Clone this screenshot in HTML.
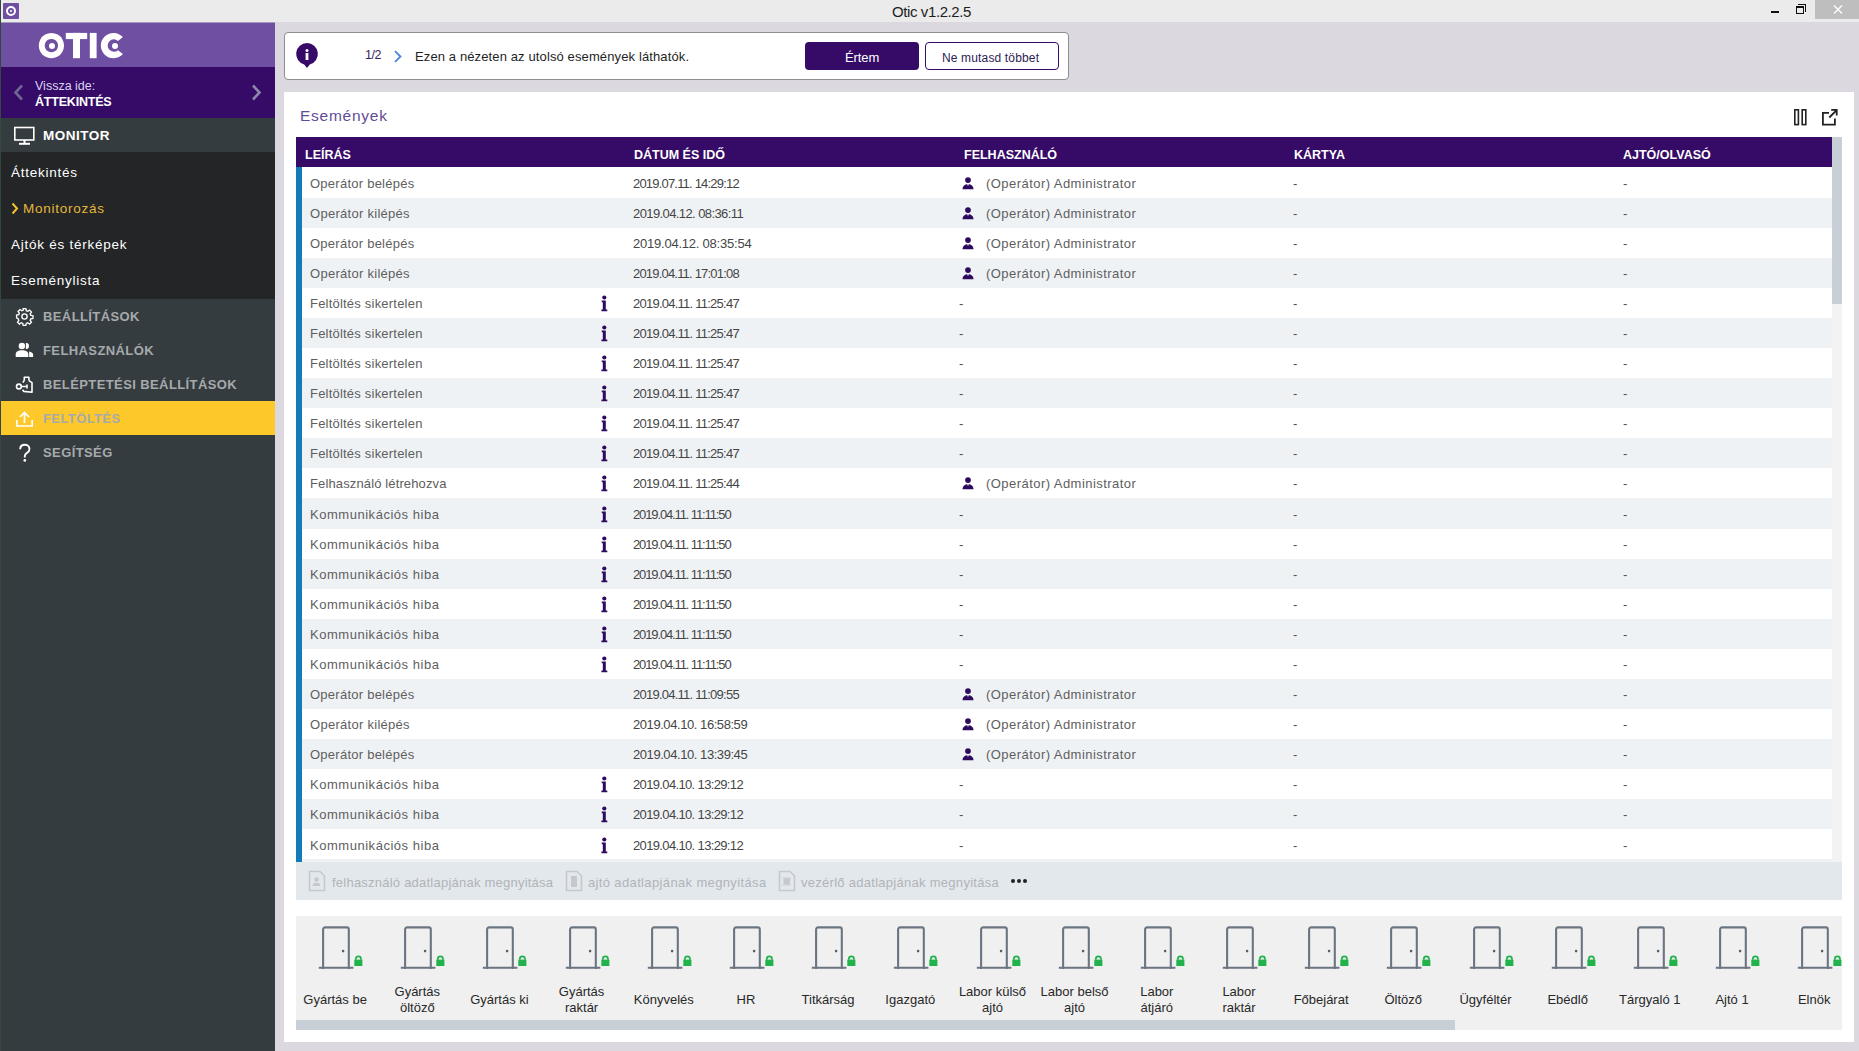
<!DOCTYPE html>
<html><head><meta charset="utf-8"><title>Otic</title><style>
*{margin:0;padding:0;box-sizing:border-box}
html,body{width:1859px;height:1051px;overflow:hidden}
body{background:#dcd8df;font-family:"Liberation Sans", sans-serif;position:relative}
.a{position:absolute}
.t{position:absolute;white-space:nowrap;line-height:1}
</style></head>
<body>
<div class="a" style="left:0;top:0;width:1859px;height:22px;background:#ebebeb"></div>
<div class="a" style="left:3px;top:3px;width:16px;height:16px;background:#6f4fa1;border-radius:1px"></div>
<div class="a" style="left:6px;top:6px;width:10px;height:10px;border:2.5px solid #fff;border-radius:50%"></div>
<div class="a" style="left:10px;top:10px;width:2px;height:2px;background:#fff;border-radius:50%"></div>
<div class="t" style="left:892px;top:4px;font-size:15px;color:#1e1e1e;letter-spacing:-0.4px">Otic v1.2.2.5</div>
<div class="a" style="left:1771px;top:11px;width:8px;height:2px;background:#111"></div>
<div class="a" style="left:1798px;top:4px;width:8px;height:8px;border-top:1.5px solid #111;border-right:1.5px solid #111"></div>
<div class="a" style="left:1796px;top:6px;width:8px;height:8px;border:1.5px solid #111;border-top-width:2px;background:#ebebeb"></div>
<div class="a" style="left:1815px;top:0;width:44px;height:19px;background:#bebebe"></div>
<svg class="a" style="left:1833px;top:5px" width="10" height="9" viewBox="0 0 10 9"><path d="M1 0.5L9 8.5M9 0.5L1 8.5" stroke="#fff" stroke-width="1.3"/></svg>
<div class="a" style="left:0;top:0;width:1px;height:1051px;background:#34493d"></div>
<div class="a" style="left:1px;top:22px;width:274px;height:1px;background:#a898bf"></div>
<div class="a" style="left:1px;top:23px;width:274px;height:1028px;background:#353c3f"></div>
<div class="a" style="left:1px;top:23px;width:274px;height:44px;background:#6f4fa1"></div>
<svg class="a" style="left:37px;top:32px" width="90" height="28" viewBox="0 0 90 28">
<g fill="#fff">
<path fill-rule="evenodd" d="M14.4 0.9a12.65 12.65 0 1 0 0.01 0zM14.4 6.9a6.65 6.65 0 1 1 -0.01 0z"/>
<circle cx="15" cy="13.9" r="3"/>
<rect x="28.8" y="0.9" width="21.4" height="6.2"/>
<rect x="36" y="0.9" width="7" height="25.3"/>
<rect x="52.8" y="0.9" width="6.8" height="25.3"/>
<path d="M85.9 5.1A12.65 12.65 0 1 0 85.9 22L81 18.2A6.2 6.2 0 1 1 81 8.9Z"/>
<circle cx="78" cy="13.9" r="3"/>
</g></svg>
<div class="a" style="left:1px;top:67px;width:274px;height:51px;background:#350b67"></div>
<svg class="a" style="left:13px;top:84px" width="11" height="17" viewBox="0 0 11 17"><path d="M9 1.5L2.5 8.5L9 15.5" fill="none" stroke="#6d6791" stroke-width="2.6"/></svg>
<svg class="a" style="left:251px;top:84px" width="11" height="17" viewBox="0 0 11 17"><path d="M2 1.5L8.5 8.5L2 15.5" fill="none" stroke="#8e88ad" stroke-width="2.6"/></svg>
<div class="t" style="left:35px;top:80px;font-size:12.5px;color:#dcd3f0;letter-spacing:0px">Vissza ide:</div>
<div class="t" style="left:35px;top:96px;font-size:12.5px;font-weight:700;color:#fff;letter-spacing:-0.2px">ÁTTEKINTÉS</div>
<svg class="a" style="left:13px;top:126px" width="23" height="21" viewBox="0 0 23 21"><rect x="1.8" y="1.5" width="19" height="12.5" fill="none" stroke="#fff" stroke-width="1.6"/><rect x="10.5" y="14" width="2" height="3" fill="#fff"/><rect x="6" y="16.8" width="11" height="2" fill="#fff"/></svg>
<div class="t" style="left:43px;top:129px;font-size:13.5px;font-weight:700;color:#fff;letter-spacing:0.5px">MONITOR</div>
<div class="a" style="left:1px;top:152px;width:274px;height:147px;background:#232527"></div>
<div class="t" style="left:11px;top:166px;font-size:13.5px;color:#fff;letter-spacing:0.75px">Áttekintés</div>
<svg class="a" style="left:11px;top:202px" width="8" height="13" viewBox="0 0 8 13"><path d="M1.5 1.5L6 6.5L1.5 11.5" fill="none" stroke="#f2c12e" stroke-width="2"/></svg>
<div class="t" style="left:23px;top:202px;font-size:13.5px;color:#e4b83a;letter-spacing:0.75px">Monitorozás</div>
<div class="t" style="left:11px;top:238px;font-size:13.5px;color:#fff;letter-spacing:0.75px">Ajtók és térképek</div>
<div class="t" style="left:11px;top:274px;font-size:13.5px;color:#fff;letter-spacing:0.75px">Eseménylista</div>
<div class="a" style="left:1px;top:401px;width:274px;height:34px;background:#fdc82a"></div>
<div class="t" style="left:43px;top:310px;font-size:13px;font-weight:700;color:#a6aaad;letter-spacing:0.4px">BEÁLLÍTÁSOK</div>
<div class="t" style="left:43px;top:344px;font-size:13px;font-weight:700;color:#a6aaad;letter-spacing:0.4px">FELHASZNÁLÓK</div>
<div class="t" style="left:43px;top:378px;font-size:13px;font-weight:700;color:#a6aaad;letter-spacing:0.4px">BELÉPTETÉSI BEÁLLÍTÁSOK</div>
<div class="t" style="left:43px;top:412px;font-size:13px;font-weight:700;color:#a6aaad;letter-spacing:0.4px">FELTÖLTÉS</div>
<div class="t" style="left:43px;top:446px;font-size:13px;font-weight:700;color:#a6aaad;letter-spacing:0.4px">SEGÍTSÉG</div>
<svg class="a" style="left:15px;top:307px" width="19" height="19" viewBox="0 0 24 24"><path fill="none" stroke="#fff" stroke-width="1.7" d="M10.3 2h3.4l.5 2.7 1.9.8 2.3-1.6 2.4 2.4-1.6 2.3.8 1.9 2.7.5v3.4l-2.7.5-.8 1.9 1.6 2.3-2.4 2.4-2.3-1.6-1.9.8-.5 2.7h-3.4l-.5-2.7-1.9-.8-2.3 1.6-2.4-2.4 1.6-2.3-.8-1.9L2 13.7v-3.4l2.7-.5.8-1.9-1.6-2.3 2.4-2.4 2.3 1.6 1.9-.8z"/><circle cx="12" cy="12" r="3.3" fill="none" stroke="#fff" stroke-width="1.7"/></svg>
<svg class="a" style="left:15px;top:342px" width="19" height="16" viewBox="0 0 19 16"><circle cx="6.9" cy="4" r="3.2" fill="#fff"/><path d="M0.7 15.1V12.1C0.7 9.8 3.4 8.3 7 8.3S13.3 9.8 13.3 12.1V15.1Z" fill="#fff"/><path d="M10.7 0.9A3 3 0 0 1 10.7 6.9A4.2 4.2 0 0 0 10.7 0.9Z" fill="#fff"/><path d="M10.9 0.9A3 3 0 0 1 10.9 6.9Z" fill="#fff"/><path d="M14.1 9.4c2.4 0.6 4 1.6 4 3.2v2.5h-4z" fill="#fff"/></svg>
<svg class="a" style="left:15px;top:375px" width="19" height="19" viewBox="0 0 19 19"><circle cx="3.9" cy="11.5" r="2.4" fill="none" stroke="#fff" stroke-width="1.6"/><path d="M6.3 11.5H12M12 9.6V13.4" fill="none" stroke="#fff" stroke-width="1.6"/><path d="M9.3 5.6V2.2H13.9V5.6M9.3 5.6L7.8 7.4M13.9 5.6L17 7.6V17.2L8.7 16.4L7.6 14.8" fill="none" stroke="#fff" stroke-width="1.6" stroke-linejoin="round"/></svg>
<svg class="a" style="left:15px;top:410px" width="19" height="18" viewBox="0 0 19 18"><path d="M9.5 13V2.5M5 7l4.5-4.5L14 7" fill="none" stroke="#fff" stroke-width="1.7"/><path d="M1.8 10v6h15.4v-6" fill="none" stroke="#fff" stroke-width="1.7"/></svg>
<svg class="a" style="left:17px;top:443px" width="15" height="20" viewBox="0 0 15 20"><path d="M3.2 6.2C3.2 3.5 5.1 1.7 7.8 1.7S12.5 3.5 12.5 6c0 2.3-1.5 3.2-2.8 4.1-1.2 0.8-1.9 1.6-1.9 3.1v1.3" fill="none" stroke="#fff" stroke-width="1.9"/><circle cx="7.8" cy="17.4" r="1.35" fill="#fff"/></svg>
<div class="a" style="left:284px;top:32px;width:785px;height:48px;background:#fff;border:1px solid #8d8d8d;border-radius:4px"></div>
<svg class="a" style="left:295px;top:42px" width="24" height="27" viewBox="0 0 24 27"><path d="M12 1a11 11 0 0 1 2.8 21.6L12 26l-2.8-3.4A11 11 0 0 1 12 1z" fill="#350b67"/><circle cx="12" cy="8.6" r="1.5" fill="#fff"/><rect x="10.6" y="11" width="2.8" height="7" fill="#fff"/></svg>
<div class="t" style="left:365px;top:49px;font-size:12.5px;color:#34285a;letter-spacing:-0.5px">1/2</div>
<svg class="a" style="left:393px;top:50px" width="10" height="13" viewBox="0 0 10 13"><path d="M2 1.2L7.5 6.5L2 11.8" fill="none" stroke="#4a86da" stroke-width="1.8"/></svg>
<div class="t" style="left:415px;top:50px;font-size:13px;color:#1f1f1f;letter-spacing:0.12px">Ezen a nézeten az utolsó események láthatók.</div>
<div class="a" style="left:805px;top:42px;width:114px;height:28px;background:#350b67;border-radius:4px"></div>
<div class="t" style="left:845px;top:51px;font-size:13px;color:#fff;letter-spacing:-0.1px">Értem</div>
<div class="a" style="left:925px;top:42px;width:134px;height:28px;background:#fff;border:1px solid #350b67;border-radius:4px"></div>
<div class="t" style="left:942px;top:52px;font-size:12px;color:#2e2255;letter-spacing:0.15px">Ne mutasd többet</div>
<div class="a" style="left:284px;top:92px;width:1570px;height:950px;background:#fff"></div>
<div class="t" style="left:300px;top:108px;font-size:15.5px;color:#5f4c96;letter-spacing:0.75px">Események</div>
<svg class="a" style="left:1792px;top:108px" width="17" height="19" viewBox="0 0 17 19"><rect x="2.8" y="1.8" width="3.6" height="14.8" fill="none" stroke="#222" stroke-width="1.6"/><rect x="10.2" y="1.8" width="3.6" height="14.8" fill="none" stroke="#222" stroke-width="1.6"/></svg>
<svg class="a" style="left:1820px;top:107px" width="20" height="20" viewBox="0 0 20 20"><path d="M9 5.9H2.9v11.8h12V11.6" fill="none" stroke="#222" stroke-width="1.8"/><path d="M9.3 10.5L16.4 3.4M11.2 2.9h5.5v5.5" fill="none" stroke="#222" stroke-width="1.8"/></svg>
<div class="a" style="left:296px;top:137px;width:1536px;height:30px;background:#350b67"></div>
<div class="t" style="left:305px;top:149px;font-size:12.5px;font-weight:700;color:#fff;letter-spacing:0px">LEÍRÁS</div>
<div class="t" style="left:634px;top:149px;font-size:12.5px;font-weight:700;color:#fff;letter-spacing:0px">DÁTUM ÉS IDŐ</div>
<div class="t" style="left:964px;top:149px;font-size:12.5px;font-weight:700;color:#fff;letter-spacing:0px">FELHASZNÁLÓ</div>
<div class="t" style="left:1294px;top:149px;font-size:12.5px;font-weight:700;color:#fff;letter-spacing:0px">KÁRTYA</div>
<div class="t" style="left:1623px;top:149px;font-size:12.5px;font-weight:700;color:#fff;letter-spacing:0px">AJTÓ/OLVASÓ</div>
<div class="a" style="left:1832px;top:137px;width:10px;height:725px;background:#f3f3f3"></div>
<div class="a" style="left:1832px;top:137px;width:10px;height:167px;background:#c9cfd6"></div>
<div class="a" style="left:296px;top:167px;width:1536px;height:695px;overflow:hidden">
<div class="a" style="left:0;top:0px;width:1536px;height:31px;background:#fff"></div>
<div class="a" style="left:0;top:31px;width:1536px;height:30px;background:#eff2f5"></div>
<div class="a" style="left:0;top:61px;width:1536px;height:30px;background:#fff"></div>
<div class="a" style="left:0;top:91px;width:1536px;height:30px;background:#eff2f5"></div>
<div class="a" style="left:0;top:121px;width:1536px;height:30px;background:#fff"></div>
<div class="a" style="left:0;top:151px;width:1536px;height:30px;background:#eff2f5"></div>
<div class="a" style="left:0;top:181px;width:1536px;height:30px;background:#fff"></div>
<div class="a" style="left:0;top:211px;width:1536px;height:30px;background:#eff2f5"></div>
<div class="a" style="left:0;top:241px;width:1536px;height:30px;background:#fff"></div>
<div class="a" style="left:0;top:271px;width:1536px;height:30px;background:#eff2f5"></div>
<div class="a" style="left:0;top:301px;width:1536px;height:30px;background:#fff"></div>
<div class="a" style="left:0;top:331px;width:1536px;height:31px;background:#eff2f5"></div>
<div class="a" style="left:0;top:362px;width:1536px;height:30px;background:#fff"></div>
<div class="a" style="left:0;top:392px;width:1536px;height:30px;background:#eff2f5"></div>
<div class="a" style="left:0;top:422px;width:1536px;height:30px;background:#fff"></div>
<div class="a" style="left:0;top:452px;width:1536px;height:30px;background:#eff2f5"></div>
<div class="a" style="left:0;top:482px;width:1536px;height:30px;background:#fff"></div>
<div class="a" style="left:0;top:512px;width:1536px;height:30px;background:#eff2f5"></div>
<div class="a" style="left:0;top:542px;width:1536px;height:30px;background:#fff"></div>
<div class="a" style="left:0;top:572px;width:1536px;height:30px;background:#eff2f5"></div>
<div class="a" style="left:0;top:602px;width:1536px;height:30px;background:#fff"></div>
<div class="a" style="left:0;top:632px;width:1536px;height:30px;background:#eff2f5"></div>
<div class="a" style="left:0;top:662px;width:1536px;height:30px;background:#fff"></div>
<div class="a" style="left:0;top:692px;width:1536px;height:30px;background:#eff2f5"></div>
<div class="t" style="left:14px;top:10px;font-size:13px;color:#5e5e5e;letter-spacing:0.25px">Operátor belépés</div>
<div class="t" style="left:337px;top:10px;font-size:13px;color:#454545;letter-spacing:-0.805px">2019.07.11. 14:29:12</div>
<svg class="a" style="left:666px;top:10px" width="12" height="13" viewBox="0 0 12 13"><circle cx="6" cy="3.1" r="2.9" fill="#2e0a5e"/><path d="M0.5 12.2c0-3 2.2-5 5.5-5s5.5 2 5.5 5z" fill="#2e0a5e"/><path d="M5 7.3h2l-1 1.6z" fill="#fff"/></svg>
<div class="t" style="left:690px;top:10px;font-size:13px;color:#5e5e5e;letter-spacing:0.45px">(Operátor) Administrator</div>
<div class="t" style="left:997px;top:10px;font-size:13px;color:#505050">-</div>
<div class="t" style="left:1327px;top:10px;font-size:13px;color:#505050">-</div>
<div class="t" style="left:14px;top:40px;font-size:13px;color:#5e5e5e;letter-spacing:0.28px">Operátor kilépés</div>
<div class="t" style="left:337px;top:40px;font-size:13px;color:#454545;letter-spacing:-0.594px">2019.04.12. 08:36:11</div>
<svg class="a" style="left:666px;top:40px" width="12" height="13" viewBox="0 0 12 13"><circle cx="6" cy="3.1" r="2.9" fill="#2e0a5e"/><path d="M0.5 12.2c0-3 2.2-5 5.5-5s5.5 2 5.5 5z" fill="#2e0a5e"/><path d="M5 7.3h2l-1 1.6z" fill="#fff"/></svg>
<div class="t" style="left:690px;top:40px;font-size:13px;color:#5e5e5e;letter-spacing:0.45px">(Operátor) Administrator</div>
<div class="t" style="left:997px;top:40px;font-size:13px;color:#505050">-</div>
<div class="t" style="left:1327px;top:40px;font-size:13px;color:#505050">-</div>
<div class="t" style="left:14px;top:70px;font-size:13px;color:#5e5e5e;letter-spacing:0.25px">Operátor belépés</div>
<div class="t" style="left:337px;top:70px;font-size:13px;color:#454545;letter-spacing:-0.224px">2019.04.12. 08:35:54</div>
<svg class="a" style="left:666px;top:70px" width="12" height="13" viewBox="0 0 12 13"><circle cx="6" cy="3.1" r="2.9" fill="#2e0a5e"/><path d="M0.5 12.2c0-3 2.2-5 5.5-5s5.5 2 5.5 5z" fill="#2e0a5e"/><path d="M5 7.3h2l-1 1.6z" fill="#fff"/></svg>
<div class="t" style="left:690px;top:70px;font-size:13px;color:#5e5e5e;letter-spacing:0.45px">(Operátor) Administrator</div>
<div class="t" style="left:997px;top:70px;font-size:13px;color:#505050">-</div>
<div class="t" style="left:1327px;top:70px;font-size:13px;color:#505050">-</div>
<div class="t" style="left:14px;top:100px;font-size:13px;color:#5e5e5e;letter-spacing:0.28px">Operátor kilépés</div>
<div class="t" style="left:337px;top:100px;font-size:13px;color:#454545;letter-spacing:-0.805px">2019.04.11. 17:01:08</div>
<svg class="a" style="left:666px;top:100px" width="12" height="13" viewBox="0 0 12 13"><circle cx="6" cy="3.1" r="2.9" fill="#2e0a5e"/><path d="M0.5 12.2c0-3 2.2-5 5.5-5s5.5 2 5.5 5z" fill="#2e0a5e"/><path d="M5 7.3h2l-1 1.6z" fill="#fff"/></svg>
<div class="t" style="left:690px;top:100px;font-size:13px;color:#5e5e5e;letter-spacing:0.45px">(Operátor) Administrator</div>
<div class="t" style="left:997px;top:100px;font-size:13px;color:#505050">-</div>
<div class="t" style="left:1327px;top:100px;font-size:13px;color:#505050">-</div>
<div class="t" style="left:14px;top:130px;font-size:13px;color:#5e5e5e;letter-spacing:0.21px">Feltöltés sikertelen</div>
<svg class="a" style="left:305px;top:128px" width="7" height="17" viewBox="0 0 7 17"><ellipse cx="3.3" cy="2.4" rx="2.1" ry="2" fill="#2e0a5e"/><path d="M0.7 5.6h4.1v8.9h1.5V16.2H0.4v-1.7H1.8V7.2H0.7z" fill="#2e0a5e"/></svg>
<div class="t" style="left:337px;top:130px;font-size:13px;color:#454545;letter-spacing:-0.754px">2019.04.11. 11:25:47</div>
<div class="t" style="left:663px;top:130px;font-size:13px;color:#505050">-</div>
<div class="t" style="left:997px;top:130px;font-size:13px;color:#505050">-</div>
<div class="t" style="left:1327px;top:130px;font-size:13px;color:#505050">-</div>
<div class="t" style="left:14px;top:160px;font-size:13px;color:#5e5e5e;letter-spacing:0.21px">Feltöltés sikertelen</div>
<svg class="a" style="left:305px;top:158px" width="7" height="17" viewBox="0 0 7 17"><ellipse cx="3.3" cy="2.4" rx="2.1" ry="2" fill="#2e0a5e"/><path d="M0.7 5.6h4.1v8.9h1.5V16.2H0.4v-1.7H1.8V7.2H0.7z" fill="#2e0a5e"/></svg>
<div class="t" style="left:337px;top:160px;font-size:13px;color:#454545;letter-spacing:-0.754px">2019.04.11. 11:25:47</div>
<div class="t" style="left:663px;top:160px;font-size:13px;color:#505050">-</div>
<div class="t" style="left:997px;top:160px;font-size:13px;color:#505050">-</div>
<div class="t" style="left:1327px;top:160px;font-size:13px;color:#505050">-</div>
<div class="t" style="left:14px;top:190px;font-size:13px;color:#5e5e5e;letter-spacing:0.21px">Feltöltés sikertelen</div>
<svg class="a" style="left:305px;top:188px" width="7" height="17" viewBox="0 0 7 17"><ellipse cx="3.3" cy="2.4" rx="2.1" ry="2" fill="#2e0a5e"/><path d="M0.7 5.6h4.1v8.9h1.5V16.2H0.4v-1.7H1.8V7.2H0.7z" fill="#2e0a5e"/></svg>
<div class="t" style="left:337px;top:190px;font-size:13px;color:#454545;letter-spacing:-0.754px">2019.04.11. 11:25:47</div>
<div class="t" style="left:663px;top:190px;font-size:13px;color:#505050">-</div>
<div class="t" style="left:997px;top:190px;font-size:13px;color:#505050">-</div>
<div class="t" style="left:1327px;top:190px;font-size:13px;color:#505050">-</div>
<div class="t" style="left:14px;top:220px;font-size:13px;color:#5e5e5e;letter-spacing:0.21px">Feltöltés sikertelen</div>
<svg class="a" style="left:305px;top:218px" width="7" height="17" viewBox="0 0 7 17"><ellipse cx="3.3" cy="2.4" rx="2.1" ry="2" fill="#2e0a5e"/><path d="M0.7 5.6h4.1v8.9h1.5V16.2H0.4v-1.7H1.8V7.2H0.7z" fill="#2e0a5e"/></svg>
<div class="t" style="left:337px;top:220px;font-size:13px;color:#454545;letter-spacing:-0.754px">2019.04.11. 11:25:47</div>
<div class="t" style="left:663px;top:220px;font-size:13px;color:#505050">-</div>
<div class="t" style="left:997px;top:220px;font-size:13px;color:#505050">-</div>
<div class="t" style="left:1327px;top:220px;font-size:13px;color:#505050">-</div>
<div class="t" style="left:14px;top:250px;font-size:13px;color:#5e5e5e;letter-spacing:0.21px">Feltöltés sikertelen</div>
<svg class="a" style="left:305px;top:248px" width="7" height="17" viewBox="0 0 7 17"><ellipse cx="3.3" cy="2.4" rx="2.1" ry="2" fill="#2e0a5e"/><path d="M0.7 5.6h4.1v8.9h1.5V16.2H0.4v-1.7H1.8V7.2H0.7z" fill="#2e0a5e"/></svg>
<div class="t" style="left:337px;top:250px;font-size:13px;color:#454545;letter-spacing:-0.754px">2019.04.11. 11:25:47</div>
<div class="t" style="left:663px;top:250px;font-size:13px;color:#505050">-</div>
<div class="t" style="left:997px;top:250px;font-size:13px;color:#505050">-</div>
<div class="t" style="left:1327px;top:250px;font-size:13px;color:#505050">-</div>
<div class="t" style="left:14px;top:280px;font-size:13px;color:#5e5e5e;letter-spacing:0.21px">Feltöltés sikertelen</div>
<svg class="a" style="left:305px;top:278px" width="7" height="17" viewBox="0 0 7 17"><ellipse cx="3.3" cy="2.4" rx="2.1" ry="2" fill="#2e0a5e"/><path d="M0.7 5.6h4.1v8.9h1.5V16.2H0.4v-1.7H1.8V7.2H0.7z" fill="#2e0a5e"/></svg>
<div class="t" style="left:337px;top:280px;font-size:13px;color:#454545;letter-spacing:-0.754px">2019.04.11. 11:25:47</div>
<div class="t" style="left:663px;top:280px;font-size:13px;color:#505050">-</div>
<div class="t" style="left:997px;top:280px;font-size:13px;color:#505050">-</div>
<div class="t" style="left:1327px;top:280px;font-size:13px;color:#505050">-</div>
<div class="t" style="left:14px;top:310px;font-size:13px;color:#5e5e5e;letter-spacing:0.13px">Felhasználó létrehozva</div>
<svg class="a" style="left:305px;top:308px" width="7" height="17" viewBox="0 0 7 17"><ellipse cx="3.3" cy="2.4" rx="2.1" ry="2" fill="#2e0a5e"/><path d="M0.7 5.6h4.1v8.9h1.5V16.2H0.4v-1.7H1.8V7.2H0.7z" fill="#2e0a5e"/></svg>
<div class="t" style="left:337px;top:310px;font-size:13px;color:#454545;letter-spacing:-0.754px">2019.04.11. 11:25:44</div>
<svg class="a" style="left:666px;top:310px" width="12" height="13" viewBox="0 0 12 13"><circle cx="6" cy="3.1" r="2.9" fill="#2e0a5e"/><path d="M0.5 12.2c0-3 2.2-5 5.5-5s5.5 2 5.5 5z" fill="#2e0a5e"/><path d="M5 7.3h2l-1 1.6z" fill="#fff"/></svg>
<div class="t" style="left:690px;top:310px;font-size:13px;color:#5e5e5e;letter-spacing:0.45px">(Operátor) Administrator</div>
<div class="t" style="left:997px;top:310px;font-size:13px;color:#505050">-</div>
<div class="t" style="left:1327px;top:310px;font-size:13px;color:#505050">-</div>
<div class="t" style="left:14px;top:341px;font-size:13px;color:#5e5e5e;letter-spacing:0.53px">Kommunikációs hiba</div>
<svg class="a" style="left:305px;top:339px" width="7" height="17" viewBox="0 0 7 17"><ellipse cx="3.3" cy="2.4" rx="2.1" ry="2" fill="#2e0a5e"/><path d="M0.7 5.6h4.1v8.9h1.5V16.2H0.4v-1.7H1.8V7.2H0.7z" fill="#2e0a5e"/></svg>
<div class="t" style="left:337px;top:341px;font-size:13px;color:#454545;letter-spacing:-1.124px">2019.04.11. 11:11:50</div>
<div class="t" style="left:663px;top:341px;font-size:13px;color:#505050">-</div>
<div class="t" style="left:997px;top:341px;font-size:13px;color:#505050">-</div>
<div class="t" style="left:1327px;top:341px;font-size:13px;color:#505050">-</div>
<div class="t" style="left:14px;top:371px;font-size:13px;color:#5e5e5e;letter-spacing:0.53px">Kommunikációs hiba</div>
<svg class="a" style="left:305px;top:369px" width="7" height="17" viewBox="0 0 7 17"><ellipse cx="3.3" cy="2.4" rx="2.1" ry="2" fill="#2e0a5e"/><path d="M0.7 5.6h4.1v8.9h1.5V16.2H0.4v-1.7H1.8V7.2H0.7z" fill="#2e0a5e"/></svg>
<div class="t" style="left:337px;top:371px;font-size:13px;color:#454545;letter-spacing:-1.124px">2019.04.11. 11:11:50</div>
<div class="t" style="left:663px;top:371px;font-size:13px;color:#505050">-</div>
<div class="t" style="left:997px;top:371px;font-size:13px;color:#505050">-</div>
<div class="t" style="left:1327px;top:371px;font-size:13px;color:#505050">-</div>
<div class="t" style="left:14px;top:401px;font-size:13px;color:#5e5e5e;letter-spacing:0.53px">Kommunikációs hiba</div>
<svg class="a" style="left:305px;top:399px" width="7" height="17" viewBox="0 0 7 17"><ellipse cx="3.3" cy="2.4" rx="2.1" ry="2" fill="#2e0a5e"/><path d="M0.7 5.6h4.1v8.9h1.5V16.2H0.4v-1.7H1.8V7.2H0.7z" fill="#2e0a5e"/></svg>
<div class="t" style="left:337px;top:401px;font-size:13px;color:#454545;letter-spacing:-1.124px">2019.04.11. 11:11:50</div>
<div class="t" style="left:663px;top:401px;font-size:13px;color:#505050">-</div>
<div class="t" style="left:997px;top:401px;font-size:13px;color:#505050">-</div>
<div class="t" style="left:1327px;top:401px;font-size:13px;color:#505050">-</div>
<div class="t" style="left:14px;top:431px;font-size:13px;color:#5e5e5e;letter-spacing:0.53px">Kommunikációs hiba</div>
<svg class="a" style="left:305px;top:429px" width="7" height="17" viewBox="0 0 7 17"><ellipse cx="3.3" cy="2.4" rx="2.1" ry="2" fill="#2e0a5e"/><path d="M0.7 5.6h4.1v8.9h1.5V16.2H0.4v-1.7H1.8V7.2H0.7z" fill="#2e0a5e"/></svg>
<div class="t" style="left:337px;top:431px;font-size:13px;color:#454545;letter-spacing:-1.124px">2019.04.11. 11:11:50</div>
<div class="t" style="left:663px;top:431px;font-size:13px;color:#505050">-</div>
<div class="t" style="left:997px;top:431px;font-size:13px;color:#505050">-</div>
<div class="t" style="left:1327px;top:431px;font-size:13px;color:#505050">-</div>
<div class="t" style="left:14px;top:461px;font-size:13px;color:#5e5e5e;letter-spacing:0.53px">Kommunikációs hiba</div>
<svg class="a" style="left:305px;top:459px" width="7" height="17" viewBox="0 0 7 17"><ellipse cx="3.3" cy="2.4" rx="2.1" ry="2" fill="#2e0a5e"/><path d="M0.7 5.6h4.1v8.9h1.5V16.2H0.4v-1.7H1.8V7.2H0.7z" fill="#2e0a5e"/></svg>
<div class="t" style="left:337px;top:461px;font-size:13px;color:#454545;letter-spacing:-1.124px">2019.04.11. 11:11:50</div>
<div class="t" style="left:663px;top:461px;font-size:13px;color:#505050">-</div>
<div class="t" style="left:997px;top:461px;font-size:13px;color:#505050">-</div>
<div class="t" style="left:1327px;top:461px;font-size:13px;color:#505050">-</div>
<div class="t" style="left:14px;top:491px;font-size:13px;color:#5e5e5e;letter-spacing:0.53px">Kommunikációs hiba</div>
<svg class="a" style="left:305px;top:489px" width="7" height="17" viewBox="0 0 7 17"><ellipse cx="3.3" cy="2.4" rx="2.1" ry="2" fill="#2e0a5e"/><path d="M0.7 5.6h4.1v8.9h1.5V16.2H0.4v-1.7H1.8V7.2H0.7z" fill="#2e0a5e"/></svg>
<div class="t" style="left:337px;top:491px;font-size:13px;color:#454545;letter-spacing:-1.124px">2019.04.11. 11:11:50</div>
<div class="t" style="left:663px;top:491px;font-size:13px;color:#505050">-</div>
<div class="t" style="left:997px;top:491px;font-size:13px;color:#505050">-</div>
<div class="t" style="left:1327px;top:491px;font-size:13px;color:#505050">-</div>
<div class="t" style="left:14px;top:521px;font-size:13px;color:#5e5e5e;letter-spacing:0.25px">Operátor belépés</div>
<div class="t" style="left:337px;top:521px;font-size:13px;color:#454545;letter-spacing:-0.754px">2019.04.11. 11:09:55</div>
<svg class="a" style="left:666px;top:521px" width="12" height="13" viewBox="0 0 12 13"><circle cx="6" cy="3.1" r="2.9" fill="#2e0a5e"/><path d="M0.5 12.2c0-3 2.2-5 5.5-5s5.5 2 5.5 5z" fill="#2e0a5e"/><path d="M5 7.3h2l-1 1.6z" fill="#fff"/></svg>
<div class="t" style="left:690px;top:521px;font-size:13px;color:#5e5e5e;letter-spacing:0.45px">(Operátor) Administrator</div>
<div class="t" style="left:997px;top:521px;font-size:13px;color:#505050">-</div>
<div class="t" style="left:1327px;top:521px;font-size:13px;color:#505050">-</div>
<div class="t" style="left:14px;top:551px;font-size:13px;color:#5e5e5e;letter-spacing:0.28px">Operátor kilépés</div>
<div class="t" style="left:337px;top:551px;font-size:13px;color:#454545;letter-spacing:-0.434px">2019.04.10. 16:58:59</div>
<svg class="a" style="left:666px;top:551px" width="12" height="13" viewBox="0 0 12 13"><circle cx="6" cy="3.1" r="2.9" fill="#2e0a5e"/><path d="M0.5 12.2c0-3 2.2-5 5.5-5s5.5 2 5.5 5z" fill="#2e0a5e"/><path d="M5 7.3h2l-1 1.6z" fill="#fff"/></svg>
<div class="t" style="left:690px;top:551px;font-size:13px;color:#5e5e5e;letter-spacing:0.45px">(Operátor) Administrator</div>
<div class="t" style="left:997px;top:551px;font-size:13px;color:#505050">-</div>
<div class="t" style="left:1327px;top:551px;font-size:13px;color:#505050">-</div>
<div class="t" style="left:14px;top:581px;font-size:13px;color:#5e5e5e;letter-spacing:0.25px">Operátor belépés</div>
<div class="t" style="left:337px;top:581px;font-size:13px;color:#454545;letter-spacing:-0.434px">2019.04.10. 13:39:45</div>
<svg class="a" style="left:666px;top:581px" width="12" height="13" viewBox="0 0 12 13"><circle cx="6" cy="3.1" r="2.9" fill="#2e0a5e"/><path d="M0.5 12.2c0-3 2.2-5 5.5-5s5.5 2 5.5 5z" fill="#2e0a5e"/><path d="M5 7.3h2l-1 1.6z" fill="#fff"/></svg>
<div class="t" style="left:690px;top:581px;font-size:13px;color:#5e5e5e;letter-spacing:0.45px">(Operátor) Administrator</div>
<div class="t" style="left:997px;top:581px;font-size:13px;color:#505050">-</div>
<div class="t" style="left:1327px;top:581px;font-size:13px;color:#505050">-</div>
<div class="t" style="left:14px;top:611px;font-size:13px;color:#5e5e5e;letter-spacing:0.53px">Kommunikációs hiba</div>
<svg class="a" style="left:305px;top:609px" width="7" height="17" viewBox="0 0 7 17"><ellipse cx="3.3" cy="2.4" rx="2.1" ry="2" fill="#2e0a5e"/><path d="M0.7 5.6h4.1v8.9h1.5V16.2H0.4v-1.7H1.8V7.2H0.7z" fill="#2e0a5e"/></svg>
<div class="t" style="left:337px;top:611px;font-size:13px;color:#454545;letter-spacing:-0.645px">2019.04.10. 13:29:12</div>
<div class="t" style="left:663px;top:611px;font-size:13px;color:#505050">-</div>
<div class="t" style="left:997px;top:611px;font-size:13px;color:#505050">-</div>
<div class="t" style="left:1327px;top:611px;font-size:13px;color:#505050">-</div>
<div class="t" style="left:14px;top:641px;font-size:13px;color:#5e5e5e;letter-spacing:0.53px">Kommunikációs hiba</div>
<svg class="a" style="left:305px;top:639px" width="7" height="17" viewBox="0 0 7 17"><ellipse cx="3.3" cy="2.4" rx="2.1" ry="2" fill="#2e0a5e"/><path d="M0.7 5.6h4.1v8.9h1.5V16.2H0.4v-1.7H1.8V7.2H0.7z" fill="#2e0a5e"/></svg>
<div class="t" style="left:337px;top:641px;font-size:13px;color:#454545;letter-spacing:-0.645px">2019.04.10. 13:29:12</div>
<div class="t" style="left:663px;top:641px;font-size:13px;color:#505050">-</div>
<div class="t" style="left:997px;top:641px;font-size:13px;color:#505050">-</div>
<div class="t" style="left:1327px;top:641px;font-size:13px;color:#505050">-</div>
<div class="t" style="left:14px;top:672px;font-size:13px;color:#5e5e5e;letter-spacing:0.53px">Kommunikációs hiba</div>
<svg class="a" style="left:305px;top:670px" width="7" height="17" viewBox="0 0 7 17"><ellipse cx="3.3" cy="2.4" rx="2.1" ry="2" fill="#2e0a5e"/><path d="M0.7 5.6h4.1v8.9h1.5V16.2H0.4v-1.7H1.8V7.2H0.7z" fill="#2e0a5e"/></svg>
<div class="t" style="left:337px;top:672px;font-size:13px;color:#454545;letter-spacing:-0.645px">2019.04.10. 13:29:12</div>
<div class="t" style="left:663px;top:672px;font-size:13px;color:#505050">-</div>
<div class="t" style="left:997px;top:672px;font-size:13px;color:#505050">-</div>
<div class="t" style="left:1327px;top:672px;font-size:13px;color:#505050">-</div>
</div>
<div class="a" style="left:296px;top:167px;width:6px;height:695px;background:#137cb8"></div>
<div class="a" style="left:296px;top:862px;width:1546px;height:38px;background:#e3e8ed"></div>
<svg class="a" style="left:308px;top:870px" width="18" height="22" viewBox="0 0 18 22"><path d="M1.5 1.5h10.5l4.5 4.5v14.5h-15z" fill="none" stroke="#c5c9cd" stroke-width="1.6"/><circle cx="8.5" cy="9.5" r="2.2" fill="#c5c9cd"/><path d="M4.5 16c0-2.3 1.8-3.5 4-3.5s4 1.2 4 3.5z" fill="#c5c9cd"/></svg>
<div class="t" style="left:332px;top:876px;font-size:13px;color:#b0b4b8;letter-spacing:0.23px">felhasználó adatlapjának megnyitása</div>
<svg class="a" style="left:565px;top:870px" width="18" height="22" viewBox="0 0 18 22"><path d="M1.5 1.5h10.5l4.5 4.5v14.5h-15z" fill="none" stroke="#c5c9cd" stroke-width="1.6"/><rect x="6" y="6" width="6" height="11" fill="#c5c9cd"/></svg>
<div class="t" style="left:588px;top:876px;font-size:13px;color:#b0b4b8;letter-spacing:0.36px">ajtó adatlapjának megnyitása</div>
<svg class="a" style="left:778px;top:870px" width="18" height="22" viewBox="0 0 18 22"><path d="M1.5 1.5h10.5l4.5 4.5v14.5h-15z" fill="none" stroke="#c5c9cd" stroke-width="1.6"/><rect x="5.5" y="8.5" width="6.5" height="6" fill="#c5c9cd"/><path d="M4 8h9M4 15h9" stroke="#c5c9cd" stroke-width="0.8"/></svg>
<div class="t" style="left:801px;top:876px;font-size:13px;color:#b0b4b8;letter-spacing:0.28px">vezérlő adatlapjának megnyitása</div>
<div class="a" style="left:1011px;top:879px;width:4px;height:4px;border-radius:50%;background:#222"></div>
<div class="a" style="left:1017px;top:879px;width:4px;height:4px;border-radius:50%;background:#222"></div>
<div class="a" style="left:1023px;top:879px;width:4px;height:4px;border-radius:50%;background:#222"></div>
<div class="a" style="left:296px;top:916px;width:1546px;height:114px;background:#f0f0f0;overflow:hidden">
<svg class="a" style="left:22.1px;top:8px" width="46" height="46" viewBox="0 0 46 46"><path d="M5.1 45V5.4a2 2 0 0 1 2-2h21.7a2 2 0 0 1 2 2V45" fill="none" stroke="#6b7582" stroke-width="2.1"/><path d="M0.8 43.7h34.6" stroke="#6b7582" stroke-width="2.1"/><circle cx="25.1" cy="27.1" r="1.3" fill="#555d66"/><path d="M37.8 35.8v-0.9a2.6 2.6 0 0 1 5.2 0v0.9" fill="none" stroke="#21b24b" stroke-width="1.7"/><rect x="36.3" y="35.6" width="8.1" height="6.4" fill="#21b24b"/></svg>
<div class="t" style="left:-20.9px;top:76px;width:120px;text-align:center;font-size:13px;line-height:16px;color:#282828;letter-spacing:0px;white-space:normal">Gyártás be</div>
<svg class="a" style="left:104.3px;top:8px" width="46" height="46" viewBox="0 0 46 46"><path d="M5.1 45V5.4a2 2 0 0 1 2-2h21.7a2 2 0 0 1 2 2V45" fill="none" stroke="#6b7582" stroke-width="2.1"/><path d="M0.8 43.7h34.6" stroke="#6b7582" stroke-width="2.1"/><circle cx="25.1" cy="27.1" r="1.3" fill="#555d66"/><path d="M37.8 35.8v-0.9a2.6 2.6 0 0 1 5.2 0v0.9" fill="none" stroke="#21b24b" stroke-width="1.7"/><rect x="36.3" y="35.6" width="8.1" height="6.4" fill="#21b24b"/></svg>
<div class="t" style="left:61.3px;top:68px;width:120px;text-align:center;font-size:13px;line-height:16px;color:#282828;letter-spacing:0px;white-space:normal">Gyártás<br>öltöző</div>
<svg class="a" style="left:186.4px;top:8px" width="46" height="46" viewBox="0 0 46 46"><path d="M5.1 45V5.4a2 2 0 0 1 2-2h21.7a2 2 0 0 1 2 2V45" fill="none" stroke="#6b7582" stroke-width="2.1"/><path d="M0.8 43.7h34.6" stroke="#6b7582" stroke-width="2.1"/><circle cx="25.1" cy="27.1" r="1.3" fill="#555d66"/><path d="M37.8 35.8v-0.9a2.6 2.6 0 0 1 5.2 0v0.9" fill="none" stroke="#21b24b" stroke-width="1.7"/><rect x="36.3" y="35.6" width="8.1" height="6.4" fill="#21b24b"/></svg>
<div class="t" style="left:143.4px;top:76px;width:120px;text-align:center;font-size:13px;line-height:16px;color:#282828;letter-spacing:0px;white-space:normal">Gyártás ki</div>
<svg class="a" style="left:268.6px;top:8px" width="46" height="46" viewBox="0 0 46 46"><path d="M5.1 45V5.4a2 2 0 0 1 2-2h21.7a2 2 0 0 1 2 2V45" fill="none" stroke="#6b7582" stroke-width="2.1"/><path d="M0.8 43.7h34.6" stroke="#6b7582" stroke-width="2.1"/><circle cx="25.1" cy="27.1" r="1.3" fill="#555d66"/><path d="M37.8 35.8v-0.9a2.6 2.6 0 0 1 5.2 0v0.9" fill="none" stroke="#21b24b" stroke-width="1.7"/><rect x="36.3" y="35.6" width="8.1" height="6.4" fill="#21b24b"/></svg>
<div class="t" style="left:225.6px;top:68px;width:120px;text-align:center;font-size:13px;line-height:16px;color:#282828;letter-spacing:0px;white-space:normal">Gyártás<br>raktár</div>
<svg class="a" style="left:350.8px;top:8px" width="46" height="46" viewBox="0 0 46 46"><path d="M5.1 45V5.4a2 2 0 0 1 2-2h21.7a2 2 0 0 1 2 2V45" fill="none" stroke="#6b7582" stroke-width="2.1"/><path d="M0.8 43.7h34.6" stroke="#6b7582" stroke-width="2.1"/><circle cx="25.1" cy="27.1" r="1.3" fill="#555d66"/><path d="M37.8 35.8v-0.9a2.6 2.6 0 0 1 5.2 0v0.9" fill="none" stroke="#21b24b" stroke-width="1.7"/><rect x="36.3" y="35.6" width="8.1" height="6.4" fill="#21b24b"/></svg>
<div class="t" style="left:307.8px;top:76px;width:120px;text-align:center;font-size:13px;line-height:16px;color:#282828;letter-spacing:0px;white-space:normal">Könyvelés</div>
<svg class="a" style="left:433.0px;top:8px" width="46" height="46" viewBox="0 0 46 46"><path d="M5.1 45V5.4a2 2 0 0 1 2-2h21.7a2 2 0 0 1 2 2V45" fill="none" stroke="#6b7582" stroke-width="2.1"/><path d="M0.8 43.7h34.6" stroke="#6b7582" stroke-width="2.1"/><circle cx="25.1" cy="27.1" r="1.3" fill="#555d66"/><path d="M37.8 35.8v-0.9a2.6 2.6 0 0 1 5.2 0v0.9" fill="none" stroke="#21b24b" stroke-width="1.7"/><rect x="36.3" y="35.6" width="8.1" height="6.4" fill="#21b24b"/></svg>
<div class="t" style="left:390.0px;top:76px;width:120px;text-align:center;font-size:13px;line-height:16px;color:#282828;letter-spacing:0px;white-space:normal">HR</div>
<svg class="a" style="left:515.1px;top:8px" width="46" height="46" viewBox="0 0 46 46"><path d="M5.1 45V5.4a2 2 0 0 1 2-2h21.7a2 2 0 0 1 2 2V45" fill="none" stroke="#6b7582" stroke-width="2.1"/><path d="M0.8 43.7h34.6" stroke="#6b7582" stroke-width="2.1"/><circle cx="25.1" cy="27.1" r="1.3" fill="#555d66"/><path d="M37.8 35.8v-0.9a2.6 2.6 0 0 1 5.2 0v0.9" fill="none" stroke="#21b24b" stroke-width="1.7"/><rect x="36.3" y="35.6" width="8.1" height="6.4" fill="#21b24b"/></svg>
<div class="t" style="left:472.1px;top:76px;width:120px;text-align:center;font-size:13px;line-height:16px;color:#282828;letter-spacing:0px;white-space:normal">Titkárság</div>
<svg class="a" style="left:597.3px;top:8px" width="46" height="46" viewBox="0 0 46 46"><path d="M5.1 45V5.4a2 2 0 0 1 2-2h21.7a2 2 0 0 1 2 2V45" fill="none" stroke="#6b7582" stroke-width="2.1"/><path d="M0.8 43.7h34.6" stroke="#6b7582" stroke-width="2.1"/><circle cx="25.1" cy="27.1" r="1.3" fill="#555d66"/><path d="M37.8 35.8v-0.9a2.6 2.6 0 0 1 5.2 0v0.9" fill="none" stroke="#21b24b" stroke-width="1.7"/><rect x="36.3" y="35.6" width="8.1" height="6.4" fill="#21b24b"/></svg>
<div class="t" style="left:554.3px;top:76px;width:120px;text-align:center;font-size:13px;line-height:16px;color:#282828;letter-spacing:0px;white-space:normal">Igazgató</div>
<svg class="a" style="left:679.5px;top:8px" width="46" height="46" viewBox="0 0 46 46"><path d="M5.1 45V5.4a2 2 0 0 1 2-2h21.7a2 2 0 0 1 2 2V45" fill="none" stroke="#6b7582" stroke-width="2.1"/><path d="M0.8 43.7h34.6" stroke="#6b7582" stroke-width="2.1"/><circle cx="25.1" cy="27.1" r="1.3" fill="#555d66"/><path d="M37.8 35.8v-0.9a2.6 2.6 0 0 1 5.2 0v0.9" fill="none" stroke="#21b24b" stroke-width="1.7"/><rect x="36.3" y="35.6" width="8.1" height="6.4" fill="#21b24b"/></svg>
<div class="t" style="left:636.5px;top:68px;width:120px;text-align:center;font-size:13px;line-height:16px;color:#282828;letter-spacing:0px;white-space:normal">Labor külső<br>ajtó</div>
<svg class="a" style="left:761.6px;top:8px" width="46" height="46" viewBox="0 0 46 46"><path d="M5.1 45V5.4a2 2 0 0 1 2-2h21.7a2 2 0 0 1 2 2V45" fill="none" stroke="#6b7582" stroke-width="2.1"/><path d="M0.8 43.7h34.6" stroke="#6b7582" stroke-width="2.1"/><circle cx="25.1" cy="27.1" r="1.3" fill="#555d66"/><path d="M37.8 35.8v-0.9a2.6 2.6 0 0 1 5.2 0v0.9" fill="none" stroke="#21b24b" stroke-width="1.7"/><rect x="36.3" y="35.6" width="8.1" height="6.4" fill="#21b24b"/></svg>
<div class="t" style="left:718.6px;top:68px;width:120px;text-align:center;font-size:13px;line-height:16px;color:#282828;letter-spacing:0px;white-space:normal">Labor belső<br>ajtó</div>
<svg class="a" style="left:843.8px;top:8px" width="46" height="46" viewBox="0 0 46 46"><path d="M5.1 45V5.4a2 2 0 0 1 2-2h21.7a2 2 0 0 1 2 2V45" fill="none" stroke="#6b7582" stroke-width="2.1"/><path d="M0.8 43.7h34.6" stroke="#6b7582" stroke-width="2.1"/><circle cx="25.1" cy="27.1" r="1.3" fill="#555d66"/><path d="M37.8 35.8v-0.9a2.6 2.6 0 0 1 5.2 0v0.9" fill="none" stroke="#21b24b" stroke-width="1.7"/><rect x="36.3" y="35.6" width="8.1" height="6.4" fill="#21b24b"/></svg>
<div class="t" style="left:800.8px;top:68px;width:120px;text-align:center;font-size:13px;line-height:16px;color:#282828;letter-spacing:0px;white-space:normal">Labor<br>átjáró</div>
<svg class="a" style="left:926.0px;top:8px" width="46" height="46" viewBox="0 0 46 46"><path d="M5.1 45V5.4a2 2 0 0 1 2-2h21.7a2 2 0 0 1 2 2V45" fill="none" stroke="#6b7582" stroke-width="2.1"/><path d="M0.8 43.7h34.6" stroke="#6b7582" stroke-width="2.1"/><circle cx="25.1" cy="27.1" r="1.3" fill="#555d66"/><path d="M37.8 35.8v-0.9a2.6 2.6 0 0 1 5.2 0v0.9" fill="none" stroke="#21b24b" stroke-width="1.7"/><rect x="36.3" y="35.6" width="8.1" height="6.4" fill="#21b24b"/></svg>
<div class="t" style="left:883.0px;top:68px;width:120px;text-align:center;font-size:13px;line-height:16px;color:#282828;letter-spacing:0px;white-space:normal">Labor<br>raktár</div>
<svg class="a" style="left:1008.1px;top:8px" width="46" height="46" viewBox="0 0 46 46"><path d="M5.1 45V5.4a2 2 0 0 1 2-2h21.7a2 2 0 0 1 2 2V45" fill="none" stroke="#6b7582" stroke-width="2.1"/><path d="M0.8 43.7h34.6" stroke="#6b7582" stroke-width="2.1"/><circle cx="25.1" cy="27.1" r="1.3" fill="#555d66"/><path d="M37.8 35.8v-0.9a2.6 2.6 0 0 1 5.2 0v0.9" fill="none" stroke="#21b24b" stroke-width="1.7"/><rect x="36.3" y="35.6" width="8.1" height="6.4" fill="#21b24b"/></svg>
<div class="t" style="left:965.1px;top:76px;width:120px;text-align:center;font-size:13px;line-height:16px;color:#282828;letter-spacing:0px;white-space:normal">Főbejárat</div>
<svg class="a" style="left:1090.3px;top:8px" width="46" height="46" viewBox="0 0 46 46"><path d="M5.1 45V5.4a2 2 0 0 1 2-2h21.7a2 2 0 0 1 2 2V45" fill="none" stroke="#6b7582" stroke-width="2.1"/><path d="M0.8 43.7h34.6" stroke="#6b7582" stroke-width="2.1"/><circle cx="25.1" cy="27.1" r="1.3" fill="#555d66"/><path d="M37.8 35.8v-0.9a2.6 2.6 0 0 1 5.2 0v0.9" fill="none" stroke="#21b24b" stroke-width="1.7"/><rect x="36.3" y="35.6" width="8.1" height="6.4" fill="#21b24b"/></svg>
<div class="t" style="left:1047.3px;top:76px;width:120px;text-align:center;font-size:13px;line-height:16px;color:#282828;letter-spacing:0px;white-space:normal">Öltöző</div>
<svg class="a" style="left:1172.5px;top:8px" width="46" height="46" viewBox="0 0 46 46"><path d="M5.1 45V5.4a2 2 0 0 1 2-2h21.7a2 2 0 0 1 2 2V45" fill="none" stroke="#6b7582" stroke-width="2.1"/><path d="M0.8 43.7h34.6" stroke="#6b7582" stroke-width="2.1"/><circle cx="25.1" cy="27.1" r="1.3" fill="#555d66"/><path d="M37.8 35.8v-0.9a2.6 2.6 0 0 1 5.2 0v0.9" fill="none" stroke="#21b24b" stroke-width="1.7"/><rect x="36.3" y="35.6" width="8.1" height="6.4" fill="#21b24b"/></svg>
<div class="t" style="left:1129.5px;top:76px;width:120px;text-align:center;font-size:13px;line-height:16px;color:#282828;letter-spacing:0px;white-space:normal">Ügyféltér</div>
<svg class="a" style="left:1254.7px;top:8px" width="46" height="46" viewBox="0 0 46 46"><path d="M5.1 45V5.4a2 2 0 0 1 2-2h21.7a2 2 0 0 1 2 2V45" fill="none" stroke="#6b7582" stroke-width="2.1"/><path d="M0.8 43.7h34.6" stroke="#6b7582" stroke-width="2.1"/><circle cx="25.1" cy="27.1" r="1.3" fill="#555d66"/><path d="M37.8 35.8v-0.9a2.6 2.6 0 0 1 5.2 0v0.9" fill="none" stroke="#21b24b" stroke-width="1.7"/><rect x="36.3" y="35.6" width="8.1" height="6.4" fill="#21b24b"/></svg>
<div class="t" style="left:1211.7px;top:76px;width:120px;text-align:center;font-size:13px;line-height:16px;color:#282828;letter-spacing:0px;white-space:normal">Ebédlő</div>
<svg class="a" style="left:1336.8px;top:8px" width="46" height="46" viewBox="0 0 46 46"><path d="M5.1 45V5.4a2 2 0 0 1 2-2h21.7a2 2 0 0 1 2 2V45" fill="none" stroke="#6b7582" stroke-width="2.1"/><path d="M0.8 43.7h34.6" stroke="#6b7582" stroke-width="2.1"/><circle cx="25.1" cy="27.1" r="1.3" fill="#555d66"/><path d="M37.8 35.8v-0.9a2.6 2.6 0 0 1 5.2 0v0.9" fill="none" stroke="#21b24b" stroke-width="1.7"/><rect x="36.3" y="35.6" width="8.1" height="6.4" fill="#21b24b"/></svg>
<div class="t" style="left:1293.8px;top:76px;width:120px;text-align:center;font-size:13px;line-height:16px;color:#282828;letter-spacing:0px;white-space:normal">Tárgyaló 1</div>
<svg class="a" style="left:1419.0px;top:8px" width="46" height="46" viewBox="0 0 46 46"><path d="M5.1 45V5.4a2 2 0 0 1 2-2h21.7a2 2 0 0 1 2 2V45" fill="none" stroke="#6b7582" stroke-width="2.1"/><path d="M0.8 43.7h34.6" stroke="#6b7582" stroke-width="2.1"/><circle cx="25.1" cy="27.1" r="1.3" fill="#555d66"/><path d="M37.8 35.8v-0.9a2.6 2.6 0 0 1 5.2 0v0.9" fill="none" stroke="#21b24b" stroke-width="1.7"/><rect x="36.3" y="35.6" width="8.1" height="6.4" fill="#21b24b"/></svg>
<div class="t" style="left:1376.0px;top:76px;width:120px;text-align:center;font-size:13px;line-height:16px;color:#282828;letter-spacing:0px;white-space:normal">Ajtó 1</div>
<svg class="a" style="left:1501.2px;top:8px" width="46" height="46" viewBox="0 0 46 46"><path d="M5.1 45V5.4a2 2 0 0 1 2-2h21.7a2 2 0 0 1 2 2V45" fill="none" stroke="#6b7582" stroke-width="2.1"/><path d="M0.8 43.7h34.6" stroke="#6b7582" stroke-width="2.1"/><circle cx="25.1" cy="27.1" r="1.3" fill="#555d66"/><path d="M37.8 35.8v-0.9a2.6 2.6 0 0 1 5.2 0v0.9" fill="none" stroke="#21b24b" stroke-width="1.7"/><rect x="36.3" y="35.6" width="8.1" height="6.4" fill="#21b24b"/></svg>
<div class="t" style="left:1458.2px;top:76px;width:120px;text-align:center;font-size:13px;line-height:16px;color:#282828;letter-spacing:0px;white-space:normal">Elnök</div>
</div>
<div class="a" style="left:296px;top:1020px;width:1546px;height:10px;background:#f0f0f0"></div>
<div class="a" style="left:296px;top:1020px;width:1159px;height:10px;background:#c9cfd6"></div>
</body></html>
